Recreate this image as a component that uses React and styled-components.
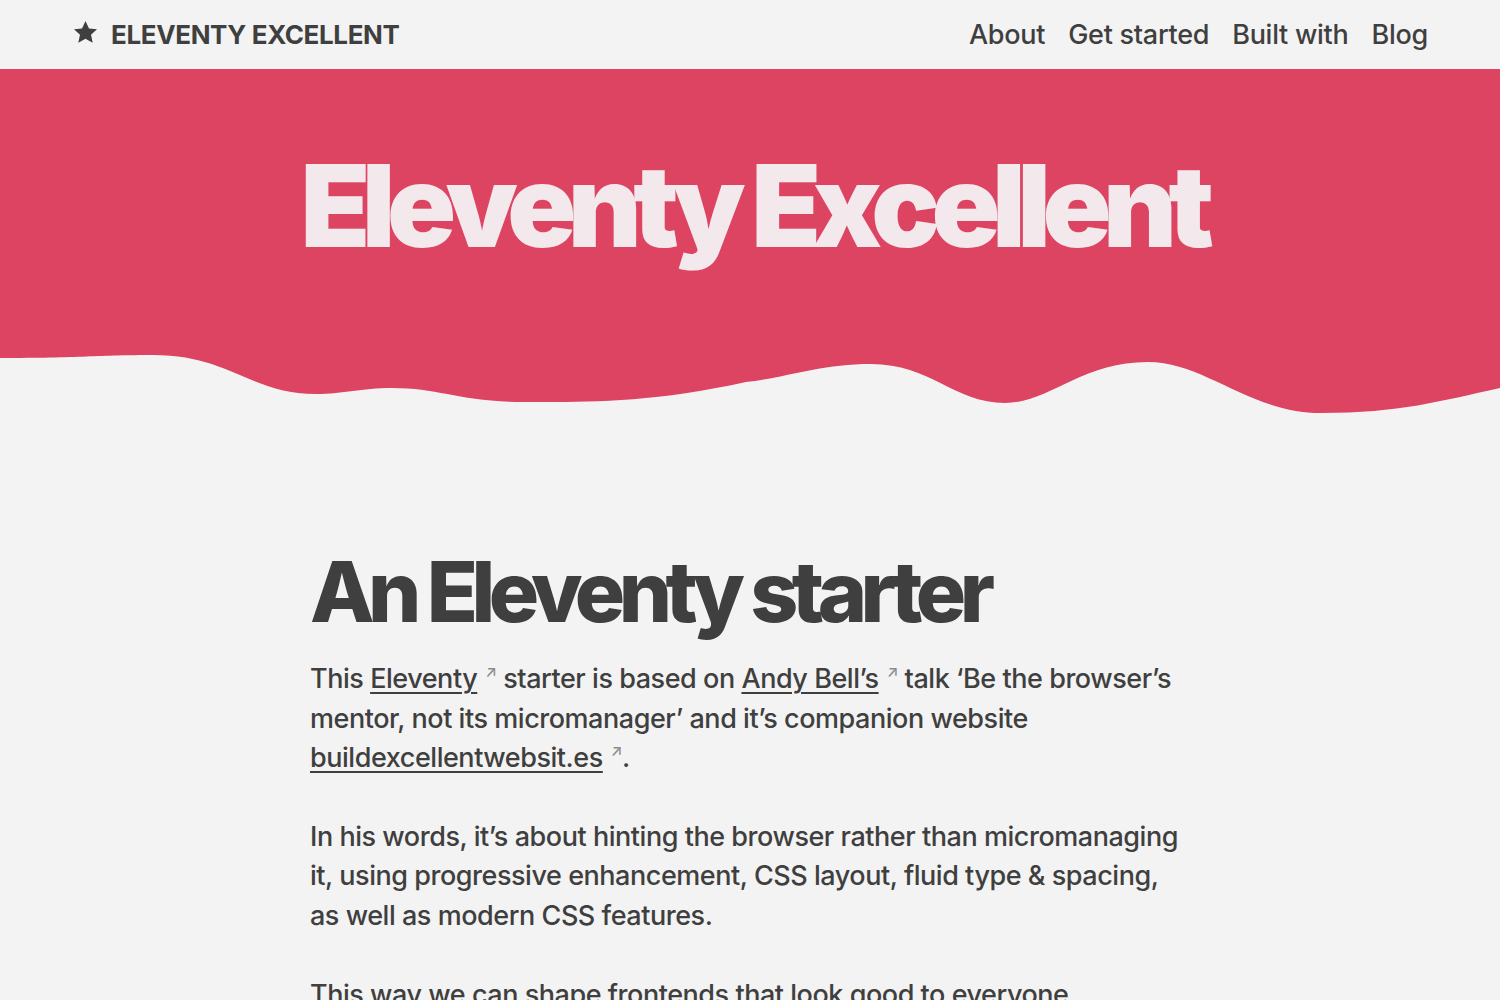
import styled, { createGlobalStyle } from "styled-components";

const Global = createGlobalStyle`
	html, body {
		margin: 0;
		padding: 0;
		background: #f3f3f3;
		color: #3f3f3f;
		font-family: Inter, "Noto Sans", sans-serif;
	}
`;

const Bar = styled.header`
	display: flex;
	align-items: center;
	justify-content: space-between;
	height: 69px;
	padding: 0 72px;
`;

const Brand = styled.a`
	display: flex;
	align-items: center;
	gap: 12px;
	color: #3f3f3f;
	text-decoration: none;
	font-weight: 700;
	font-size: 26px;
	letter-spacing: -0.014em;
	text-transform: uppercase;
	svg {
		width: 27px;
		height: 27px;
		margin-top: -5px;
	}
`;

const Nav = styled.nav`
	display: flex;
	gap: 23px;
	a {
		color: #3f3f3f;
		text-decoration: none;
		font-size: 27px;
		font-weight: 500;
		letter-spacing: -0.01em;
	}
`;

const Hero = styled.section`
	background: #dd4462;
	display: flex;
	justify-content: center;
	padding: 68px 0 80px;
	h1 {
		margin: 0 0 0 6px;
		color: #f3e8ec;
		font-size: 114px;
		font-weight: 900;
		letter-spacing: -0.075em;
		line-height: 137px;
	}
`;

const Wave = styled.svg`
	display: block;
	width: 100%;
	height: 62px;
`;

const Main = styled.main`
	max-width: 880px;
	margin: 0 auto;
	padding: 130px 0 0;
	h2 {
		margin: 0 0 21px;
		font-size: 84px;
		font-weight: 800;
		letter-spacing: -0.078em;
		line-height: 1.1;
	}
	p {
		margin: 0 0 39.7px;
		font-size: 27px;
		font-weight: 500;
		line-height: 39.3px;
		letter-spacing: -0.017em;
	}
`;

const Ext = styled.a`
	color: #3f3f3f;
	text-decoration: underline;
	text-underline-offset: 4px;
	text-decoration-thickness: 2px;
	&::after {
		content: "↗";
		display: inline-block;
		font-size: 15px;
		line-height: 0;
		color: #8a8a8a;
		position: relative;
		top: -11px;
		margin-left: 8px;
		text-decoration: none;
	}
`;

const Star = () => (
	<svg viewBox="0 0 24 24" fill="#3f3f3f">
		<path d="M12 1.8l3.1 6.6 7.1.8-5.3 4.9 1.5 7.1L12 17.6l-6.4 3.6 1.5-7.1-5.3-4.9 7.1-.8z" />
	</svg>
);

export default function App() {
	return (
		<>
			<Global />
			<Bar>
				<Brand href="#">
					<Star />
					Eleventy Excellent
				</Brand>
				<Nav>
					<a href="#">About</a>
					<a href="#">Get started</a>
					<a href="#">Built with</a>
					<a href="#">Blog</a>
				</Nav>
			</Bar>
			<Hero>
				<h1>Eleventy Excellent</h1>
			</Hero>
			<Wave viewBox="0 0 1500 62" preserveAspectRatio="none">
				<path
					fill="#dd4462"
					d="M0 0 H1500 V34 C1440 47 1400 59 1321 59 C1250 59 1205 8 1148 8 C1080 8 1050 49 1005 49 C955 49 930 10 871 10 C820 10 790 23 746 28 C650 49 590 48 526 48 C460 48 440 34 392 34 C360 34 345 40 316 40 C250 40 230 1 153 1 C100 1 80 4 0 4 Z"
				/>
			</Wave>
			<Main>
				<h2>An Eleventy starter</h2>
				<p>
					This <Ext href="#">Eleventy</Ext> starter is based on{" "}
					<Ext href="#">Andy Bell’s</Ext> talk ‘Be the browser’s mentor,
					not its micromanager’ and it’s companion website{" "}
					<Ext href="#">buildexcellentwebsit.es</Ext>.
				</p>
				<p>
					In his words, it’s about hinting the browser rather than
					micromanaging it, using progressive enhancement, CSS layout,
					fluid type &amp; spacing, as well as modern CSS features.
				</p>
				<p>
					This way we can shape frontends that look good to everyone,
					regardless of their device, browser or connection.
				</p>
			</Main>
		</>
	);
}
